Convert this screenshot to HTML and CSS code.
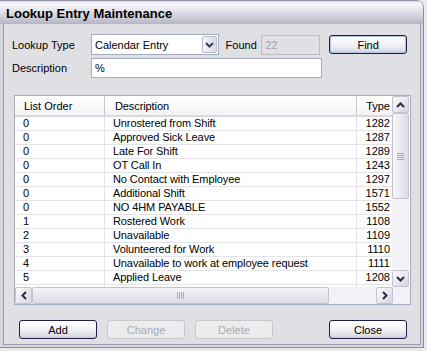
FILE: index.html
```html
<!DOCTYPE html>
<html lang="en">
<head>
    <meta charset="UTF-8">
    <title>Lookup Entry Maintenance</title>
    <link rel="stylesheet" href="styles.css">
</head>
<body>
    <div class="window">
        <div class="titlebar">Lookup Entry Maintenance</div>

        <div class="panel">
            <!-- search fields -->
            <div class="row row-top">
                <span class="field-label">Lookup Type</span>
                <div class="combo">
                    <span class="combo-text">Calendar Entry</span>
                    <span class="combo-btn">
                        <svg width="9" height="6" viewBox="0 0 9 6"><path d="M1 1 L4.5 4.5 L8 1" fill="none" stroke="#3c3c5a" stroke-width="2"/></svg>
                    </span>
                </div>
                <span class="found-label">Found</span>
                <div class="textbox found disabled">22</div>
                <button class="btn default find">Find</button>
            </div>
            <div class="row row-desc">
                <span class="field-label">Description</span>
                <div class="textbox desc">%</div>
            </div>

            <!-- list view -->
            <div class="listview">
                <div class="lv-body">
                    <div class="lv-main">
                        <div class="lv-header">
                            <div class="hcell c1">List Order</div>
                            <div class="hcell c2">Description</div>
                            <div class="hcell c3">Type</div>
                        </div>
                        <div class="lv-row"><div class="cell c1">0</div><div class="cell c2">Unrostered from Shift</div><div class="cell c3">1282</div></div>
                        <div class="lv-row"><div class="cell c1">0</div><div class="cell c2">Approved Sick Leave</div><div class="cell c3">1287</div></div>
                        <div class="lv-row"><div class="cell c1">0</div><div class="cell c2">Late For Shift</div><div class="cell c3">1289</div></div>
                        <div class="lv-row"><div class="cell c1">0</div><div class="cell c2">OT Call In</div><div class="cell c3">1243</div></div>
                        <div class="lv-row"><div class="cell c1">0</div><div class="cell c2">No Contact with Employee</div><div class="cell c3">1297</div></div>
                        <div class="lv-row"><div class="cell c1">0</div><div class="cell c2">Additional Shift</div><div class="cell c3">1571</div></div>
                        <div class="lv-row"><div class="cell c1">0</div><div class="cell c2">NO 4HM PAYABLE</div><div class="cell c3">1552</div></div>
                        <div class="lv-row"><div class="cell c1">1</div><div class="cell c2">Rostered Work</div><div class="cell c3">1108</div></div>
                        <div class="lv-row"><div class="cell c1">2</div><div class="cell c2">Unavailable</div><div class="cell c3">1109</div></div>
                        <div class="lv-row"><div class="cell c1">3</div><div class="cell c2">Volunteered for Work</div><div class="cell c3">1110</div></div>
                        <div class="lv-row"><div class="cell c1">4</div><div class="cell c2">Unavailable to work at employee request</div><div class="cell c3">1111</div></div>
                        <div class="lv-row"><div class="cell c1">5</div><div class="cell c2">Applied Leave</div><div class="cell c3">1208</div></div>
                        <div class="lv-row"><div class="cell c1"></div><div class="cell c2"></div><div class="cell c3"></div></div>
                    </div>
                    <div class="vscroll">
                        <div class="sb-btn">
                            <svg width="9" height="6" viewBox="0 0 9 6"><path d="M1 5 L4.5 1.5 L8 5" fill="none" stroke="#2c2c44" stroke-width="2"/></svg>
                        </div>
                        <div class="sb-thumb v-thumb"><span class="grip-h"></span></div>
                        <div class="sb-track"></div>
                        <div class="sb-btn">
                            <svg width="9" height="6" viewBox="0 0 9 6"><path d="M1 1 L4.5 4.5 L8 1" fill="none" stroke="#2c2c44" stroke-width="2"/></svg>
                        </div>
                    </div>
                </div>
                <div class="lv-foot">
                    <div class="hscroll">
                        <div class="sb-btn">
                            <svg width="6" height="9" viewBox="0 0 6 9"><path d="M5 1 L1.5 4.5 L5 8" fill="none" stroke="#2c2c44" stroke-width="2"/></svg>
                        </div>
                        <div class="sb-thumb h-thumb"><span class="grip-v"></span></div>
                        <div class="sb-track"></div>
                        <div class="sb-btn">
                            <svg width="6" height="9" viewBox="0 0 6 9"><path d="M1 1 L4.5 4.5 L1 8" fill="none" stroke="#2c2c44" stroke-width="2"/></svg>
                        </div>
                    </div>
                    <div class="corner"></div>
                </div>
            </div>

            <!-- action buttons -->
            <div class="row row-buttons">
                <button class="btn">Add</button>
                <button class="btn" disabled>Change</button>
                <button class="btn" disabled>Delete</button>
                <button class="btn close">Close</button>
            </div>
        </div>
    </div>
</body>
</html>
```

FILE: styles.css
```css
body {
    margin: 0;
    background: #eaeaea;
    font-family: 'Liberation Sans', Arial, sans-serif;
    font-size: 11px;
    color: #000;
}

.window {
    width: 424px;
    height: 348px;
    display: flex;
    flex-direction: column;
    background: #d6d6de;
    border-right: 1px solid #8c8ca0;
    border-bottom: 1px solid #8c8ca0;
    border-top-right-radius: 8px;
    box-sizing: border-box;
    overflow: hidden;
}

.titlebar {
    height: 24px;
    flex: none;
    padding-left: 6px;
    line-height: 25px;
    font-size: 13px;
    font-weight: bold;
    background: linear-gradient(#d8d8e2 0%, #f6f6fa 12%, #e2e2ea 45%, #c6c6d4 80%, #b4b4c6 100%);
    border-top: 1px solid #9696a8;
    box-sizing: border-box;
}

.panel {
    flex: 1;
    margin: 0 2px 2px 3px;
    background: #e0dfe3;
    border: 1px solid #9c9cae;
    border-top: none;
    padding: 10px 13px 0 8px;
}

.row {
    display: flex;
    align-items: center;
}

.row-top {
    height: 21px;
}

.row-desc {
    margin-top: 3px;
    height: 20px;
}

.field-label {
    width: 79px;
    flex: none;
}

.combo {
    width: 128px;
    height: 21px;
    box-sizing: border-box;
    display: flex;
    align-items: center;
    background: #fff;
    border: 1px solid #a5acbd;
}

.combo-text {
    flex: 1;
    padding-left: 3px;
}

.combo-btn {
    width: 15px;
    height: 17px;
    margin-right: 1px;
    display: flex;
    align-items: center;
    justify-content: center;
    background: linear-gradient(to right, #f7f7fa, #d9d9e4);
    border: 1px solid #b8bccc;
    border-radius: 2px;
    box-sizing: border-box;
}

.found-label {
    margin-left: 7px;
    width: 36px;
}

.textbox {
    height: 20px;
    box-sizing: border-box;
    line-height: 18px;
    padding-left: 3px;
    background: #fff;
    border: 1px solid #a5acbd;
}

.textbox.disabled {
    background: #e0dfe3;
    border-color: #bdbdc4;
    color: #a5a5aa;
}

.found {
    width: 59px;
}

.desc {
    width: 231px;
}

.btn {
    width: 78px;
    height: 19px;
    padding: 0;
    font-family: 'Liberation Sans', Arial, sans-serif;
    font-size: 11px;
    color: #000;
    background: linear-gradient(#ffffff 0%, #f2f2f6 50%, #dedee8 85%, #c8c8d8 100%);
    border: 1px solid #1e1e46;
    border-radius: 3px;
}

.btn.default {
    box-shadow: inset 0 0 0 1px #b4c4e4;
}

.btn:disabled {
    color: #ababb0;
    background: #ececef;
    border-color: #c8c8cc;
}

.find {
    margin-left: 9px;
}

.listview {
    width: 397px;
    height: 210px;
    margin: 17px 0 0 2px;
    box-sizing: border-box;
    background: #fff;
    border: 1px solid #a5acbd;
    display: flex;
    flex-direction: column;
}

.lv-body {
    display: flex;
    height: 191px;
}

.lv-main {
    width: 377px;
    overflow: hidden;
}

.lv-header {
    display: flex;
    height: 21px;
    background: linear-gradient(#ffffff, #f4f4f6);
    border-bottom: 2px solid #d8d8de;
    box-sizing: border-box;
}

.hcell {
    line-height: 20px;
    box-sizing: border-box;
}

.hcell.c1, .hcell.c2 {
    border-right: 1px solid #c6c6cc;
}

.c1 {
    width: 90px;
    padding-left: 8px;
    flex: none;
}

.c2 {
    width: 252px;
    padding-left: 8px;
    flex: none;
    letter-spacing: -0.1px;
}

.c3 {
    width: 35px;
    flex: none;
    text-align: right;
    padding-right: 2px;
}

.hcell.c1 { padding-left: 9px; }
.hcell.c2 { padding-left: 10px; }

.lv-row {
    display: flex;
    height: 14px;
    line-height: 13px;
    border-bottom: 1px solid #e4e4e8;
    box-sizing: border-box;
}

.cell {
    box-sizing: border-box;
    white-space: nowrap;
    overflow: hidden;
}

.cell.c1, .cell.c2 {
    border-right: 1px solid #e4e4e8;
}

.vscroll {
    width: 17px;
    display: flex;
    flex-direction: column;
    background: #f2f2f6;
}

.hscroll {
    flex: 1;
    height: 17px;
    display: flex;
    background: #f2f2f6;
}

.sb-btn {
    width: 17px;
    height: 17px;
    flex: none;
    box-sizing: border-box;
    display: flex;
    align-items: center;
    justify-content: center;
    background: linear-gradient(135deg, #fbfbfd, #d6d6e2);
    border: 1px solid #c4c4d0;
    border-radius: 2px;
}

.sb-thumb {
    box-sizing: border-box;
    display: flex;
    align-items: center;
    justify-content: center;
    border: 1px solid #c4c4d0;
    border-radius: 2px;
}

.v-thumb {
    height: 86px;
    background: linear-gradient(to right, #f6f6f8, #dcdce6);
}

.h-thumb {
    width: 297px;
    background: linear-gradient(#f6f6f8, #dcdce6);
}

.sb-track {
    flex: 1;
}

.grip-h {
    width: 7px;
    height: 7px;
    background: repeating-linear-gradient(#aaaab8 0 1px, transparent 1px 2px);
}

.grip-v {
    width: 7px;
    height: 7px;
    background: repeating-linear-gradient(to right, #aaaab8 0 1px, transparent 1px 2px);
}

.lv-foot {
    display: flex;
}

.corner {
    width: 17px;
    background: #f2f2f6;
}

.row-buttons {
    margin-top: 15px;
    padding-left: 7px;
    gap: 10px;
}

.close {
    margin-left: auto;
}
```
